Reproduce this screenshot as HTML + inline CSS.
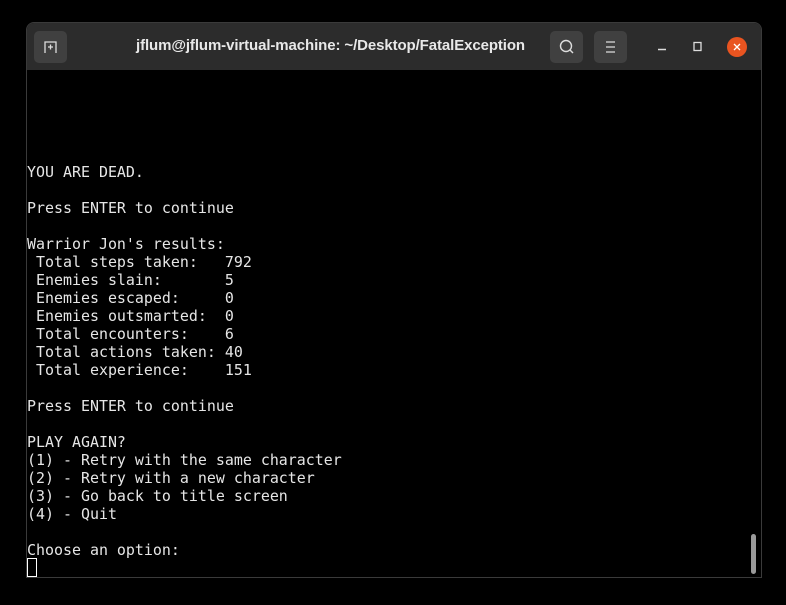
<!DOCTYPE html>
<html><head><style>
html,body{margin:0;padding:0;background:#000;width:786px;height:605px;overflow:hidden}
.win{position:absolute;left:26px;top:22px;width:734px;height:554px;background:#000;border:1px solid #3a3a3a;border-radius:8px 8px 0 0;overflow:hidden}
.hdr{position:absolute;left:0;top:0;width:734px;height:47px;background:#2c2c2c}
.btn{position:absolute;top:8px;width:33px;height:32px;background:#404040;border-radius:5px}
.title{position:absolute;left:109px;top:14px;white-space:nowrap;color:#e8e8e8;font:bold 15px "Liberation Sans",sans-serif;letter-spacing:-0.1px}
pre{position:absolute;left:0px;top:140px;margin:0;color:#e6e6e6;font:14.95px/18px "DejaVu Sans Mono","Liberation Mono",monospace}
.cur{position:absolute;left:0px;top:535px;width:8px;height:17px;border:1px solid #fff}
.sb{position:absolute;left:724px;top:511px;width:5px;height:40px;background:#9a9a9a;border-radius:3px}
</style></head><body>
<div class="win">
<div class="hdr">
<div class="btn" style="left:7px"><svg width="33" height="32"><path d="M11 22V11h11v11M14 16h5M16.5 13.5v5" stroke="#ddd" stroke-width="1.3" fill="none"/></svg></div>
<div class="title">jflum@jflum-virtual-machine: ~/Desktop/FatalException</div>
<div class="btn" style="left:523px"><svg width="33" height="32"><circle cx="16" cy="15" r="5.5" stroke="#ddd" stroke-width="1.4" fill="none"/><path d="M20 19l3 3" stroke="#ddd" stroke-width="1.4"/></svg></div>
<div class="btn" style="left:567px"><svg width="33" height="32"><path d="M12 11h9M12 16h9M12 21h9" stroke="#ddd" stroke-width="1.3"/></svg></div>
<svg style="position:absolute;left:620px;top:8px" width="110" height="32"><path d="M11 18.5h8" stroke="#ddd" stroke-width="1.4"/><rect x="47" y="11.5" width="7" height="8" stroke="#ddd" stroke-width="1.3" fill="none"/><circle cx="90" cy="16" r="10" fill="#e95420"/><path d="M87 13l6 6M93 13l-6 6" stroke="#fff" stroke-width="1.3"/></svg>
</div>
<pre>YOU ARE DEAD.

Press ENTER to continue

Warrior Jon's results:
 Total steps taken:   792
 Enemies slain:       5
 Enemies escaped:     0
 Enemies outsmarted:  0
 Total encounters:    6
 Total actions taken: 40
 Total experience:    151

Press ENTER to continue

PLAY AGAIN?
(1) - Retry with the same character
(2) - Retry with a new character
(3) - Go back to title screen
(4) - Quit

Choose an option:</pre>
<div class="cur"></div>
<div class="sb"></div>
</div>
</body></html>
